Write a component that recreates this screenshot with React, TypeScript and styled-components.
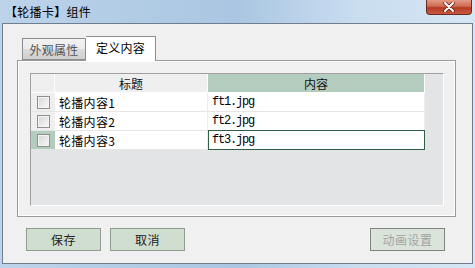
import styled, { createGlobalStyle } from "styled-components";

const GlobalStyle = createGlobalStyle`
    html, body {
        margin: 0;
        padding: 0;
        background: #c8dbee;
    }
    body {
        font-family: "Noto Sans CJK SC", "Liberation Sans", sans-serif;
        font-size: 12px;
        color: #000;
    }
`;

const Window = styled.div`
    width: 475px;
    height: 268px;
    display: flex;
    flex-direction: column;
    background: linear-gradient(90deg, #bcd3ea 0%, #aac6e2 50%, #c9ddf0 75%, #d6e6f4 100%);
    box-sizing: border-box;
    overflow: hidden;
`;
const TitleBar = styled.div`
    height: 23px;
    display: flex;
    justify-content: space-between;
    align-items: flex-start;
    padding: 0 3px 0 5px;
    flex-shrink: 0;
`;
const Title = styled.span`
    line-height: 23px;
    font-size: 12px;
    letter-spacing: 0.3px;
    color: #000;
`;
const CloseButton = styled.div`
    width: 44px;
    height: 14px;
    border: 1px solid #6a2a20;
    border-top: none;
    border-radius: 0 0 4px 4px;
    background: linear-gradient(180deg, #e29a88 0%, #cf6a52 45%, #b43a22 55%, #c85a40 100%);
    display: flex;
    align-items: center;
    justify-content: center;
    svg {
        width: 12px;
        height: 10px;
    }
`;
const Client = styled.div`
    flex: 1;
    margin: 0 2px 4px 2px;
    border: 1px solid #6f7d8c;
    background: #f0f0f0;
    display: flex;
    flex-direction: column;
`;
const TabStrip = styled.div`
    display: flex;
    align-items: flex-end;
    padding: 12px 0 0 19px;
    height: 24px;
    position: relative;
    z-index: 1;
`;
const Tab = styled.div<{ $active?: boolean }>`
    box-sizing: border-box;
    height: ${p => (p.$active ? "25px" : "22px")};
    width: ${p => (p.$active ? "70px" : "64px")};
    border: 1px solid #8a8d93;
    border-bottom: ${p => (p.$active ? "none" : "1px solid #8a8d93")};
    border-left: ${p => (p.$active ? "none" : "1px solid #8a8d93")};
    background: ${p => (p.$active ? "#fff" : "linear-gradient(180deg, #f2f2f2 0%, #ebebeb 50%, #dcdcdc 51%, #cfcfcf 100%)")};
    color: ${p => (p.$active ? "#000" : "#555")};
    display: flex;
    justify-content: center;
    align-items: center;
    padding-bottom: ${p => (p.$active ? "3px" : "0")};
    margin-bottom: ${p => (p.$active ? "-1px" : "0")};
    font-size: 12px;
    letter-spacing: 0.2px;
`;
const Panel = styled.div`
    height: 157px;
    box-sizing: border-box;
    margin: 0 16px 0 14px;
    border: 1px solid #9a9a9a;
    box-shadow: inset 1px 1px 0 #fff, inset -1px -1px 0 #fff;
    padding: 12px 11px 10px 12px;
    display: flex;
`;
const Grid = styled.div`
    flex: 1;
    border-left: 1px solid #a0a0a0;
    border-top: 1px solid #a0a0a0;
    border-right: 1px solid #fff;
    border-bottom: 1px solid #fff;
    background: #e3e4e5;
    display: flex;
    flex-direction: column;
    align-items: flex-start;
`;
const Row = styled.div`
    display: grid;
    grid-template-columns: 24px 153px 217px;
    height: 19px;
`;
const HeadCell = styled.div<{ $green?: boolean }>`
    background: ${p => (p.$green ? "#b4ccbd" : "#efefef")};
    border-right: 1px solid #fff;
    border-bottom: 1px solid #fff;
    box-sizing: border-box;
    display: flex;
    justify-content: center;
    align-items: center;
    font-size: 12px;
    color: #111;
`;
const MarkCell = styled.div<{ $selected?: boolean }>`
    background: ${p => (p.$selected ? "#b4ccbd" : "#efefef")};
    border-bottom: 1px solid #e6e6e6;
    display: flex;
    align-items: center;
    justify-content: center;
`;
const Check = styled.div`
    width: 13px;
    height: 13px;
    box-sizing: border-box;
    border: 1px solid #8f8f8f;
    background: linear-gradient(135deg, #d4d4d4 0%, #ececec 60%, #f8f8f8 100%);
    box-shadow: inset 0 0 0 1px #f4f4f4;
`;
const TextCell = styled.div<{ $editing?: boolean; $mono?: boolean }>`
    background: #fff;
    box-sizing: border-box;
    border-bottom: 1px solid ${p => (p.$editing ? "#2f5f45" : "#e6e6e6")};
    border-right: 1px solid ${p => (p.$editing ? "#2f5f45" : "#ececec")};
    border-top: ${p => (p.$editing ? "1px solid #2f5f45" : "none")};
    border-left: ${p => (p.$editing ? "1px solid #2f5f45" : "none")};
    margin-top: ${p => (p.$editing ? "-1px" : "0")};
    height: ${p => (p.$editing ? "20px" : "19px")};
    padding-left: ${p => (p.$editing ? "3px" : "4px")};
    display: flex;
    align-items: center;
    font-family: ${p => (p.$mono ? "'Liberation Mono', monospace" : "'Noto Sans CJK SC', sans-serif")};
    font-size: 12px;
    letter-spacing: ${p => (p.$mono ? "-1.2px" : "0.3px")};
    color: #000;
`;
const ButtonBar = styled.div`
    display: flex;
    gap: 9px;
    padding: 11px 27px 0 23px;
`;
const Button = styled.div<{ $disabled?: boolean }>`
    width: 75px;
    height: 23px;
    box-sizing: border-box;
    border: 1px solid ${p => (p.$disabled ? "#7f857f" : "#8e9c91")};
    background: ${p => (p.$disabled ? "#dbe4db" : "#d0ded0")};
    color: ${p => (p.$disabled ? "#a3a3a3" : "#222")};
    display: flex;
    align-items: center;
    justify-content: center;
    font-size: 12px;
    letter-spacing: 0.5px;
`;
const Spacer = styled.div`
    flex: 1;
`;

const rows = [
    { title: "轮播内容1", file: "ft1.jpg" },
    { title: "轮播内容2", file: "ft2.jpg" },
    { title: "轮播内容3", file: "ft3.jpg" },
];

export default function App() {
    const current = 2;
    return (
        <Window>
            <GlobalStyle />
            <TitleBar>
                <Title>【轮播卡】组件</Title>
                <CloseButton>
                    <svg viewBox="0 0 12 10">
                        <path d="M2 1 L10 9 M10 1 L2 9" stroke="#5a1c12" strokeWidth="3.4" strokeLinecap="round" />
                        <path d="M2 1 L10 9 M10 1 L2 9" stroke="#fff" strokeWidth="2" strokeLinecap="round" />
                    </svg>
                </CloseButton>
            </TitleBar>
            <Client>
                <TabStrip>
                    <Tab>外观属性</Tab>
                    <Tab $active>定义内容</Tab>
                </TabStrip>
                <Panel>
                    <Grid>
                        <Row>
                            <HeadCell />
                            <HeadCell>标题</HeadCell>
                            <HeadCell $green>内容</HeadCell>
                        </Row>
                        {rows.map((r, i) => (
                            <Row key={r.file}>
                                <MarkCell $selected={i === current}>
                                    <Check />
                                </MarkCell>
                                <TextCell>{r.title}</TextCell>
                                <TextCell $mono $editing={i === current}>{r.file}</TextCell>
                            </Row>
                        ))}
                    </Grid>
                </Panel>
                <ButtonBar>
                    <Button>保存</Button>
                    <Button>取消</Button>
                    <Spacer />
                    <Button $disabled>动画设置</Button>
                </ButtonBar>
            </Client>
        </Window>
    );
}
